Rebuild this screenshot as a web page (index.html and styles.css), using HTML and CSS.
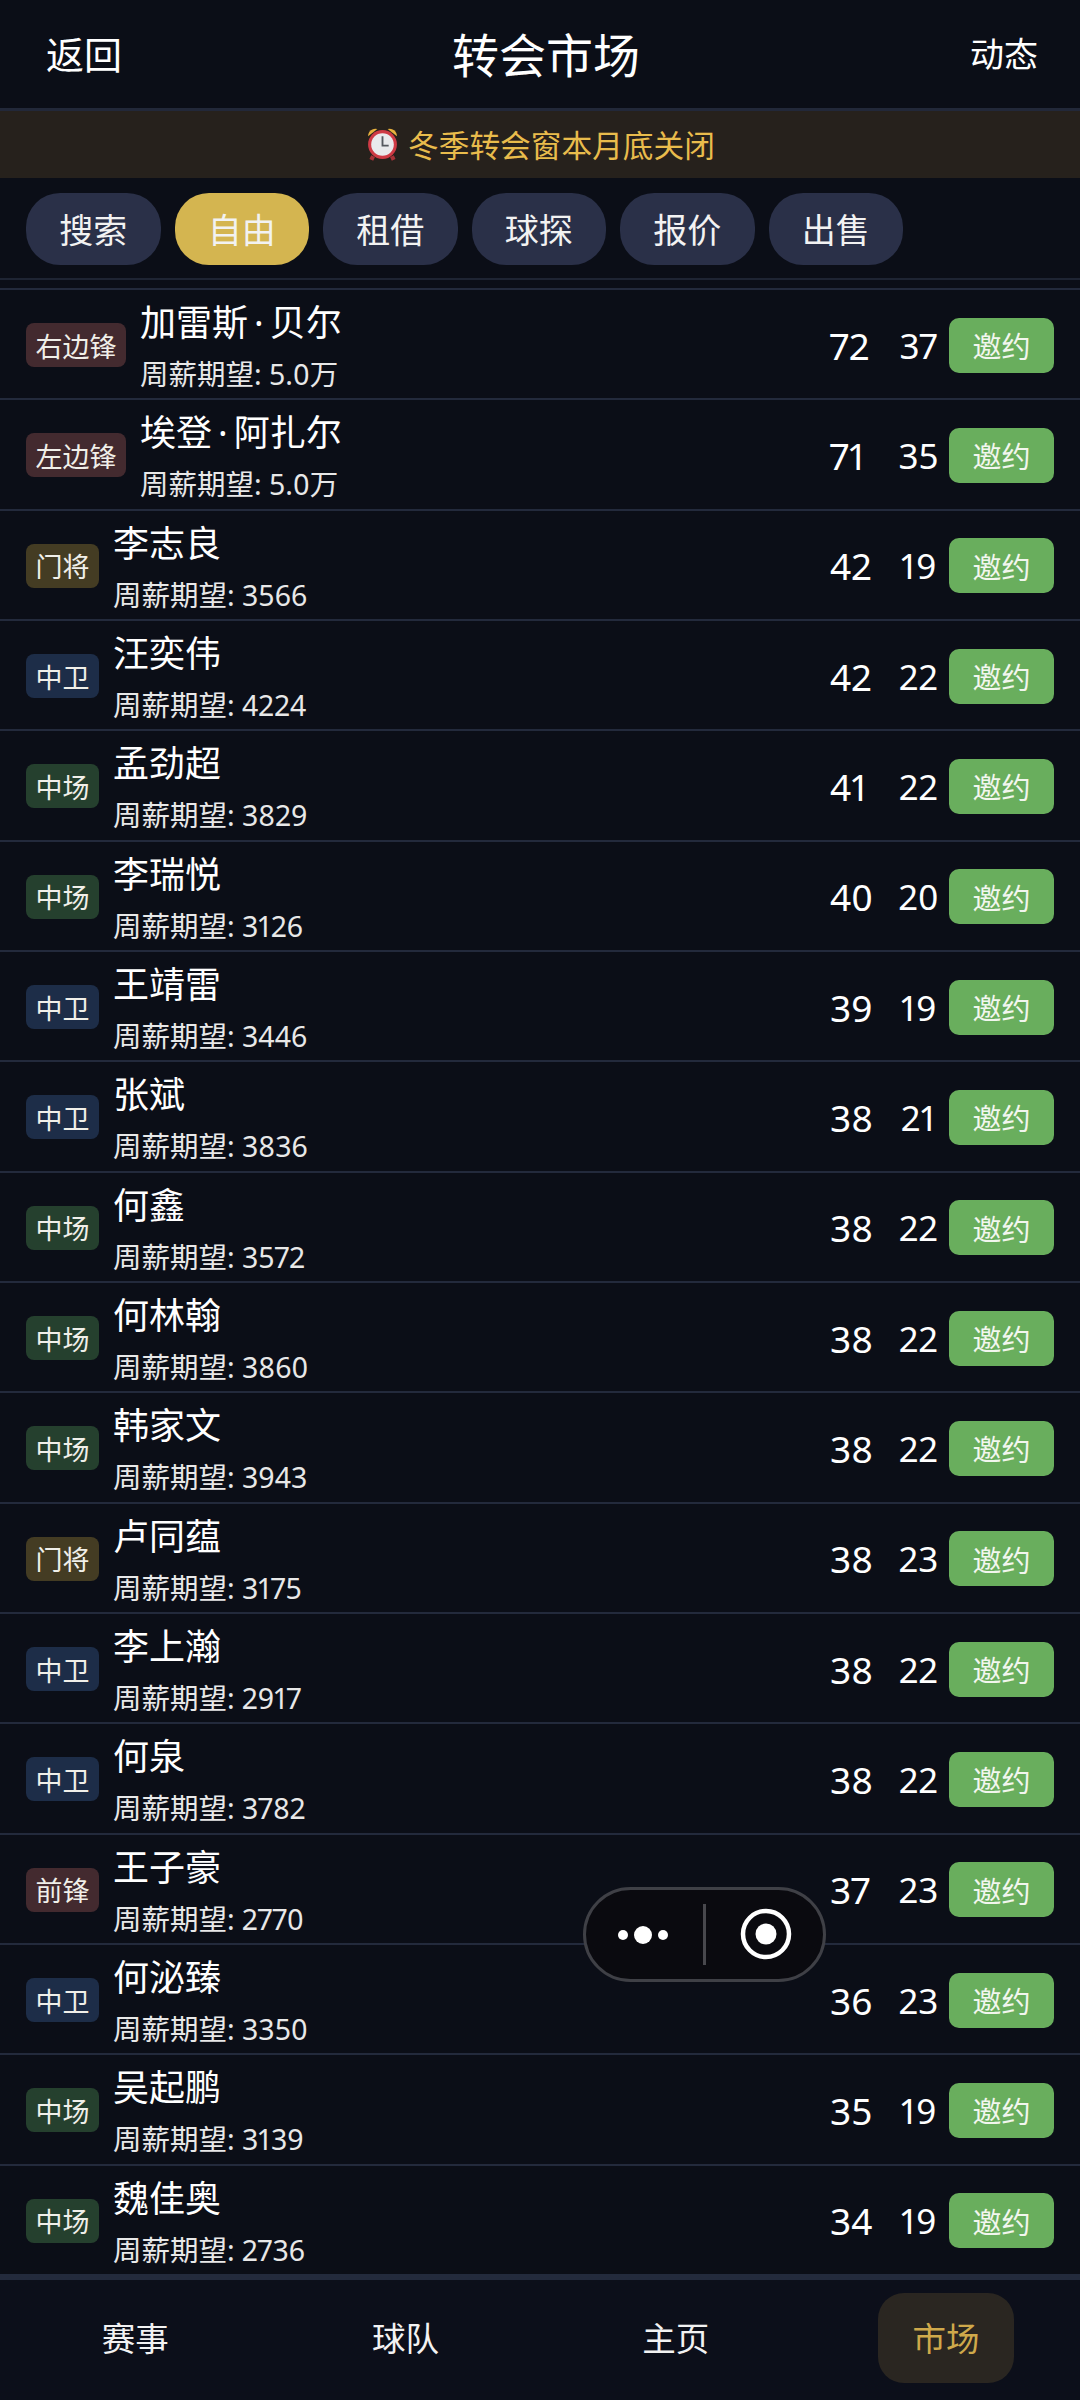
FILE: index.html
```html
<!DOCTYPE html>
<html lang="zh-CN">
<head>
  <meta charset="UTF-8" />
  <title>转会市场</title>
  <link rel="stylesheet" href="styles.css">
</head>
<body>
  <div class="top-bar">
    <span class="back">返回</span>
    <span class="title">转会市场</span>
    <span class="news">动态</span>
  </div>

  <div class="notice">
    <svg class="clock-icon" viewBox="0 0 34 34">
      <path d="M3 10 A7 7 0 0 1 12 3 Z" fill="#e8b23e"/>
      <path d="M31 10 A7 7 0 0 0 22 3 Z" fill="#e8b23e"/>
      <rect x="5" y="29" width="4" height="4" fill="#a83238" transform="rotate(25 7 31)"/>
      <rect x="25" y="29" width="4" height="4" fill="#a83238" transform="rotate(-25 27 31)"/>
      <circle cx="17" cy="18" r="14" fill="#cf3a45"/>
      <circle cx="17" cy="18" r="11" fill="#e9e9ec"/>
      <path d="M17 10 V19 H23" fill="none" stroke="#55585f" stroke-width="1.8"/>
    </svg>
    <span>冬季转会窗本月底关闭</span>
  </div>

  <div class="tabs">
    <div class="tab">搜索</div>
    <div class="tab active">自由</div>
    <div class="tab">租借</div>
    <div class="tab">球探</div>
    <div class="tab">报价</div>
    <div class="tab">出售</div>
  </div>

  <div class="player-list">
    <div class="row">
      <span class="pos pos-fw">右边锋</span>
      <div class="info"><div class="name">加雷斯<span class="dot">·</span>贝尔</div><div class="wage">周薪期望: 5.0万</div></div>
      <span class="rating">72</span><span class="age">37</span><button class="invite">邀约</button>
    </div>
    <div class="row">
      <span class="pos pos-fw">左边锋</span>
      <div class="info"><div class="name">埃登<span class="dot">·</span>阿扎尔</div><div class="wage">周薪期望: 5.0万</div></div>
      <span class="rating">71</span><span class="age">35</span><button class="invite">邀约</button>
    </div>
    <div class="row">
      <span class="pos pos-gk">门将</span>
      <div class="info"><div class="name">李志良</div><div class="wage">周薪期望: 3566</div></div>
      <span class="rating">42</span><span class="age">19</span><button class="invite">邀约</button>
    </div>
    <div class="row">
      <span class="pos pos-cb">中卫</span>
      <div class="info"><div class="name">汪奕伟</div><div class="wage">周薪期望: 4224</div></div>
      <span class="rating">42</span><span class="age">22</span><button class="invite">邀约</button>
    </div>
    <div class="row">
      <span class="pos pos-mf">中场</span>
      <div class="info"><div class="name">孟劲超</div><div class="wage">周薪期望: 3829</div></div>
      <span class="rating">41</span><span class="age">22</span><button class="invite">邀约</button>
    </div>
    <div class="row">
      <span class="pos pos-mf">中场</span>
      <div class="info"><div class="name">李瑞悦</div><div class="wage">周薪期望: 3126</div></div>
      <span class="rating">40</span><span class="age">20</span><button class="invite">邀约</button>
    </div>
    <div class="row">
      <span class="pos pos-cb">中卫</span>
      <div class="info"><div class="name">王靖雷</div><div class="wage">周薪期望: 3446</div></div>
      <span class="rating">39</span><span class="age">19</span><button class="invite">邀约</button>
    </div>
    <div class="row">
      <span class="pos pos-cb">中卫</span>
      <div class="info"><div class="name">张斌</div><div class="wage">周薪期望: 3836</div></div>
      <span class="rating">38</span><span class="age">21</span><button class="invite">邀约</button>
    </div>
    <div class="row">
      <span class="pos pos-mf">中场</span>
      <div class="info"><div class="name">何鑫</div><div class="wage">周薪期望: 3572</div></div>
      <span class="rating">38</span><span class="age">22</span><button class="invite">邀约</button>
    </div>
    <div class="row">
      <span class="pos pos-mf">中场</span>
      <div class="info"><div class="name">何林翰</div><div class="wage">周薪期望: 3860</div></div>
      <span class="rating">38</span><span class="age">22</span><button class="invite">邀约</button>
    </div>
    <div class="row">
      <span class="pos pos-mf">中场</span>
      <div class="info"><div class="name">韩家文</div><div class="wage">周薪期望: 3943</div></div>
      <span class="rating">38</span><span class="age">22</span><button class="invite">邀约</button>
    </div>
    <div class="row">
      <span class="pos pos-gk">门将</span>
      <div class="info"><div class="name">卢同蕴</div><div class="wage">周薪期望: 3175</div></div>
      <span class="rating">38</span><span class="age">23</span><button class="invite">邀约</button>
    </div>
    <div class="row">
      <span class="pos pos-cb">中卫</span>
      <div class="info"><div class="name">李上瀚</div><div class="wage">周薪期望: 2917</div></div>
      <span class="rating">38</span><span class="age">22</span><button class="invite">邀约</button>
    </div>
    <div class="row">
      <span class="pos pos-cb">中卫</span>
      <div class="info"><div class="name">何泉</div><div class="wage">周薪期望: 3782</div></div>
      <span class="rating">38</span><span class="age">22</span><button class="invite">邀约</button>
    </div>
    <div class="row">
      <span class="pos pos-st">前锋</span>
      <div class="info"><div class="name">王子豪</div><div class="wage">周薪期望: 2770</div></div>
      <span class="rating">37</span><span class="age">23</span><button class="invite">邀约</button>
    </div>
    <div class="row">
      <span class="pos pos-cb">中卫</span>
      <div class="info"><div class="name">何泌臻</div><div class="wage">周薪期望: 3350</div></div>
      <span class="rating">36</span><span class="age">23</span><button class="invite">邀约</button>
    </div>
    <div class="row">
      <span class="pos pos-mf">中场</span>
      <div class="info"><div class="name">吴起鹏</div><div class="wage">周薪期望: 3139</div></div>
      <span class="rating">35</span><span class="age">19</span><button class="invite">邀约</button>
    </div>
    <div class="row">
      <span class="pos pos-mf">中场</span>
      <div class="info"><div class="name">魏佳奥</div><div class="wage">周薪期望: 2736</div></div>
      <span class="rating">34</span><span class="age">19</span><button class="invite">邀约</button>
    </div>
  </div>

  <div class="bottom-nav">
    <div class="nav-item">赛事</div>
    <div class="nav-item">球队</div>
    <div class="nav-item">主页</div>
    <div class="nav-item active">市场</div>
  </div>

  <div class="capsule">
    <svg class="capsule-icon" viewBox="0 0 243 95">
      <circle cx="40" cy="48" r="5" fill="#fff"/>
      <circle cx="60" cy="48" r="9" fill="#fff"/>
      <circle cx="80" cy="48" r="5" fill="#fff"/>
      <rect x="120" y="17" width="3" height="61" fill="#48484d"/>
      <circle cx="183" cy="47" r="23" fill="none" stroke="#fff" stroke-width="4.5"/>
      <circle cx="183" cy="47" r="10.5" fill="#fff"/>
    </svg>
  </div>
</body>
</html>
```

FILE: styles.css
```css
* {
  box-sizing: border-box;
}

body {
  margin: 0;
  width: 1080px;
  height: 2400px;
  position: relative;
  display: flex;
  flex-direction: column;
  overflow: hidden;
  background: #0b0e17;
  color: #fff;
  font-family: "Noto Sans", "Noto Sans CJK SC", sans-serif;
  font-variant-numeric: proportional-nums;
}

.top-bar {
  height: 111px;
  padding: 0 42px 4px 46px;
  display: flex;
  justify-content: space-between;
  align-items: center;
  border-bottom: 3px solid #222839;
}

.back {
  font-size: 38px;
}

.title {
  font-size: 47px;
}

.news {
  font-size: 34px;
}

.notice {
  height: 67px;
  padding-bottom: 2px;
  display: flex;
  justify-content: center;
  align-items: center;
  gap: 8px;
  background: #26211c;
  color: #e9bc4c;
  font-size: 30.7px;
}

.clock-icon {
  width: 35px;
  height: 35px;
}

.tabs {
  height: 102px;
  padding: 15px 26px 0;
  display: flex;
  gap: 14px;
  border-bottom: 2px solid #1e2433;
}

.tab {
  width: 134.5px;
  height: 72px;
  padding-bottom: 2px;
  border-radius: 34px;
  display: flex;
  justify-content: center;
  align-items: center;
  background: #2a3048;
  color: #f2f2f2;
  font-size: 34px;
}

.tab.active {
  background: #d4b550;
}

.player-list {
  flex: 1;
  margin-top: 8px;
  border-top: 2px solid #232a3c;
}

.row {
  height: 110.33px;
  padding: 2px 26px 0 26px;
  display: flex;
  align-items: center;
  border-bottom: 2px solid #232a3c;
}

.pos {
  height: 44px;
  padding: 0 9.5px;
  border-radius: 8px;
  display: flex;
  align-items: center;
  font-size: 27px;
  color: #f0efe9;
}

.pos-fw,
.pos-st {
  background: #432a2f;
}

.pos-gk {
  background: #443c23;
}

.pos-cb {
  background: #1d2d48;
}

.pos-mf {
  background: #25402e;
}

.info {
  flex: 1;
  margin: -2px 0 0 14px;
}

.name {
  height: 60px;
  line-height: 60px;
  font-size: 36px;
}

.dot {
  margin: 0 6px;
}

.wage {
  height: 42px;
  line-height: 42px;
  font-size: 28.5px;
  color: #e8e8e8;
}

.rating {
  width: 58px;
  margin-left: -1px;
  font-size: 37px;
}

.age {
  width: 61px;
  text-align: center;
  font-size: 35px;
}

.invite {
  width: 105px;
  height: 55px;
  padding: 0;
  border: none;
  border-radius: 10px;
  background: #69ae5d;
  color: #f2f6ee;
  font-family: inherit;
  font-size: 29px;
}

.bottom-nav {
  height: 124px;
  padding: 13px 0 17px;
  display: flex;
  align-items: center;
  border-top: 4px solid #232a3c;
  background: #0c0f1a;
}

.nav-item {
  flex: 1;
  height: 90px;
  padding-bottom: 3px;
  display: flex;
  justify-content: center;
  align-items: center;
  font-size: 33.5px;
  color: #f2f2f2;
}

.nav-item.active {
  flex: none;
  width: 136px;
  margin: 0 66px 0 67px;
  border-radius: 26px;
  background: #2a2621;
  color: #cfa94b;
}

/* floating mini program capsule, sits over the list */
.capsule {
  position: absolute;
  left: 583px;
  top: 1887px;
  width: 243px;
  height: 95px;
  border: 3px solid #3f4046;
  border-radius: 48px;
  background: #0a0a0f;
}

.capsule-icon {
  position: absolute;
  left: -3px;
  top: -3px;
  width: 243px;
  height: 95px;
}
```
